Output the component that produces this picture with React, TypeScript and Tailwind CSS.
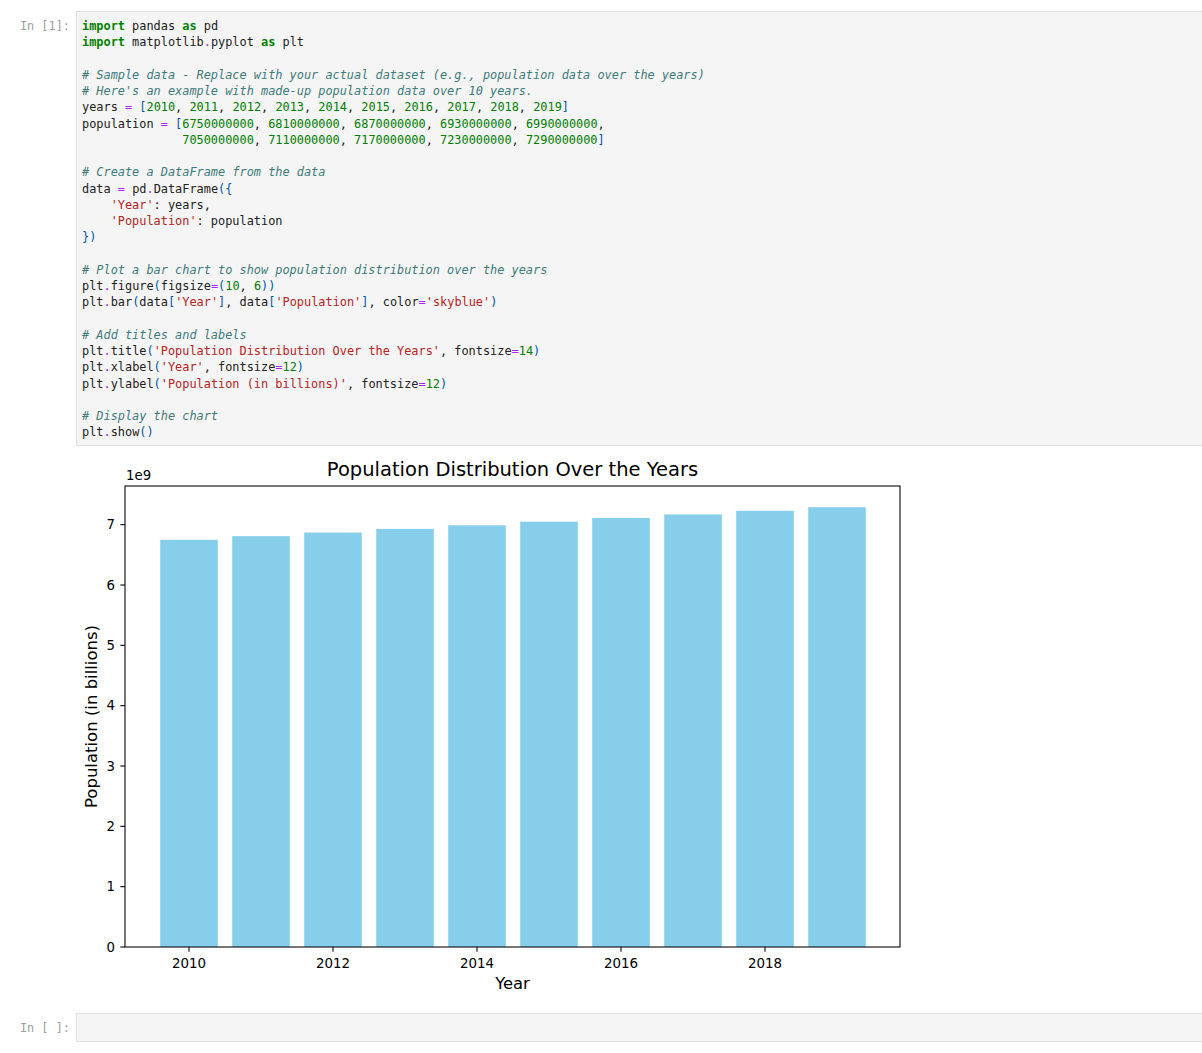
import React from "react";

// Notebook look: a Python cell, its matplotlib output, then an empty cell.
const CODE = [
  "import pandas as pd",
  "import matplotlib.pyplot as plt",
  "",
  "# Sample data - Replace with your actual dataset (e.g., population data over the years)",
  "# Here's an example with made-up population data over 10 years.",
  "years = [2010, 2011, 2012, 2013, 2014, 2015, 2016, 2017, 2018, 2019]",
  "population = [6750000000, 6810000000, 6870000000, 6930000000, 6990000000,",
  "              7050000000, 7110000000, 7170000000, 7230000000, 7290000000]",
  "",
  "# Create a DataFrame from the data",
  "data = pd.DataFrame({",
  "    'Year': years,",
  "    'Population': population",
  "})",
  "",
  "# Plot a bar chart to show population distribution over the years",
  "plt.figure(figsize=(10, 6))",
  "plt.bar(data['Year'], data['Population'], color='skyblue')",
  "",
  "# Add titles and labels",
  "plt.title('Population Distribution Over the Years', fontsize=14)",
  "plt.xlabel('Year', fontsize=12)",
  "plt.ylabel('Population (in billions)', fontsize=12)",
  "",
  "# Display the chart",
  "plt.show()",
];

type Tok = { t: string; k: "kw" | "cm" | "st" | "nu" | "op" | "br" | "tx" };

const TOK_CLASS: Record<Tok["k"], string> = {
  kw: "text-[#008000] font-bold",
  cm: "text-[#3d7b7b] italic",
  st: "text-[#ba2121]",
  nu: "text-[#008000]",
  op: "text-[#aa22ff]",
  br: "text-[#0055aa]",
  tx: "text-[#212121]",
};

function tokenize(line: string): Tok[] {
  const out: Tok[] = [];
  const re = /(#.*$)|('[^']*')|\b(import|as)\b|(\d+)|([=.])|([()[\]{}])|([^#'\d=.()[\]{}]+?(?=\b(?:import|as)\b|[#'\d=.()[\]{}]|$))/g;
  let m: RegExpExecArray | null;
  while ((m = re.exec(line)) !== null) {
    if (m[0] === "") { re.lastIndex++; continue; }
    if (m[1]) out.push({ t: m[1], k: "cm" });
    else if (m[2]) out.push({ t: m[2], k: "st" });
    else if (m[3]) out.push({ t: m[3], k: "kw" });
    else if (m[4]) out.push({ t: m[4], k: "nu" });
    else if (m[5]) out.push({ t: m[5], k: "op" });
    else if (m[6]) out.push({ t: m[6], k: "br" });
    else out.push({ t: m[0], k: "tx" });
  }
  return out;
}

const MONO = "font-['DejaVu_Sans_Mono',monospace] text-[11.9px] leading-[16.25px]";

function Prompt({ label }: { label: string }) {
  return (
    <div className={`w-[76px] shrink-0 pr-[6px] pt-[7px] text-right whitespace-pre text-[#9e9e9e] ${MONO}`}>
      {label}
    </div>
  );
}

const YEARS = [2010, 2011, 2012, 2013, 2014, 2015, 2016, 2017, 2018, 2019];
const POP = [6.75, 6.81, 6.87, 6.93, 6.99, 7.05, 7.11, 7.17, 7.23, 7.29];

// svg coords: page x - 76, page y - 449
const AX = { l: 49, r: 824, t: 36, b: 497 };
const PX_PER_B = 60.33;
const PX_PER_YEAR = 72;
const xOf = (y: number) => 113 + (y - 2010) * PX_PER_YEAR;
const yOf = (v: number) => AX.b - v * PX_PER_B;

function Chart() {
  const font = { fontFamily: "'DejaVu Sans', sans-serif" };
  return (
    <svg width={840} height={550} viewBox="0 0 840 550" style={font}>
      <rect x={0} y={0} width={840} height={550} fill="#fff" />
      {YEARS.map((y, i) => (
        <rect
          key={y}
          x={xOf(y) - 28.8}
          y={yOf(POP[i])}
          width={57.6}
          height={POP[i] * PX_PER_B}
          fill="#87ceeb"
        />
      ))}
      <rect
        x={AX.l}
        y={AX.t}
        width={AX.r - AX.l}
        height={AX.b - AX.t}
        fill="none"
        stroke="#000"
        strokeWidth={1.07}
      />
      {[0, 1, 2, 3, 4, 5, 6, 7].map((v) => (
        <g key={v}>
          <line x1={AX.l - 4.7} x2={AX.l} y1={yOf(v)} y2={yOf(v)} stroke="#000" strokeWidth={1.07} />
          <text x={39} y={yOf(v) + 4.8} fontSize={13.3} textAnchor="end" fill="#000">
            {v}
          </text>
        </g>
      ))}
      {[2010, 2012, 2014, 2016, 2018].map((y) => (
        <g key={y}>
          <line x1={xOf(y)} x2={xOf(y)} y1={AX.b} y2={AX.b + 4.7} stroke="#000" strokeWidth={1.07} />
          <text x={xOf(y)} y={517.5} fontSize={13.4} textAnchor="middle" fill="#000">
            {y}
          </text>
        </g>
      ))}
      <text x={50} y={30} fontSize={13.3} fill="#000">
        1e9
      </text>
      <text x={436.5} y={26} fontSize={19.5} textAnchor="middle" fill="#000">
        Population Distribution Over the Years
      </text>
      <text x={436.5} y={538.5} fontSize={16.4} textAnchor="middle" fill="#000">
        Year
      </text>
      <text
        x={21}
        y={266.5}
        fontSize={16.5}
        textAnchor="middle"
        fill="#000"
        transform="rotate(-90 21 266.5)"
      >
        Population (in billions)
      </text>
    </svg>
  );
}

export default function App() {
  return (
    <div className="min-h-screen bg-white pt-[11px]">
      <div className="flex">
        <Prompt label="In [1]:" />
        <div className={`flex-1 border border-r-0 border-[#e0e0e0] bg-[#f5f5f5] pl-[5px] pt-[6px] pb-[4px] ${MONO}`}>
          {CODE.map((line, i) => (
            <div key={i} className="h-[16.25px] whitespace-pre">
              {tokenize(line).map((tk, j) => (
                <span key={j} className={TOK_CLASS[tk.k]}>
                  {tk.t}
                </span>
              ))}
            </div>
          ))}
        </div>
      </div>

      <div className="mt-[4px] pl-[76px]">
        <Chart />
      </div>

      <div className="mt-[13px] flex">
        <Prompt label="In [ ]:" />
        <div className="h-[29px] flex-1 border border-r-0 border-[#e0e0e0] bg-[#f5f5f5]" />
      </div>
    </div>
  );
}
